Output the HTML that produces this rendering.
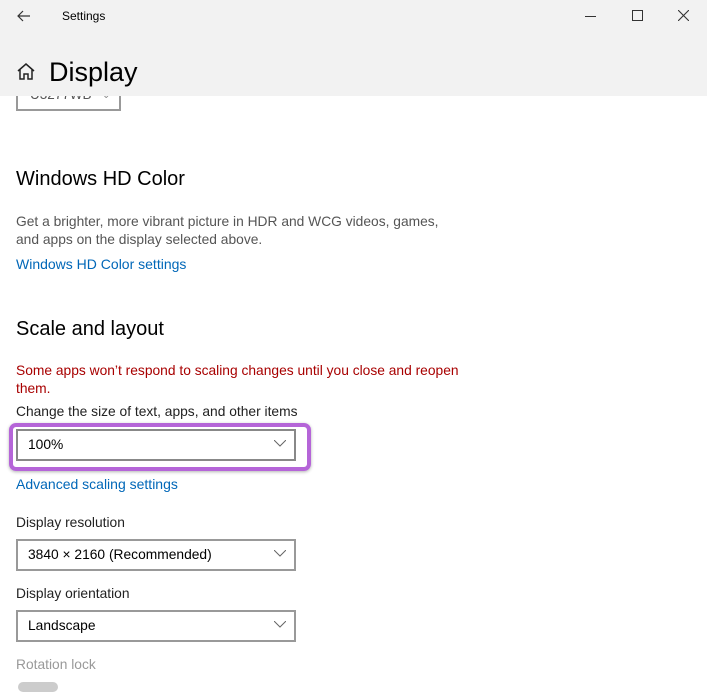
<!DOCTYPE html><html><head><style>
body{margin:0;width:707px;height:686px;overflow:hidden;background:#fff;font-family:"Liberation Sans",sans-serif;position:relative;color:#000}
.a{position:absolute;white-space:nowrap}
.t{font-size:13.8px}
.h{font-size:20px}
.l{color:#0067b8;font-size:14px}
.dd{position:absolute;left:16px;width:276px;height:28px;border:2px solid #999;box-sizing:content-box;background:#fff}
.dd span{position:absolute;left:10px;top:6px;font-size:13.8px}
.dd svg{position:absolute;right:8px;top:9px}
</style></head><body>
<div class="a" style="left:0;top:0;width:707px;height:96px;background:#f2f2f2"></div>
<svg class="a" style="left:17px;top:9px" width="14" height="14" viewBox="0 0 14 14"><path d="M13 7H1M6 2L1 7l5 5" fill="none" stroke="#333" stroke-width="1.2"/></svg>
<div class="a" style="left:62px;top:9px;font-size:12px">Settings</div>
<div class="a" style="left:585px;top:16px;width:11px;height:1px;background:#333"></div>
<div class="a" style="left:632px;top:10px;width:9px;height:9px;border:1px solid #333"></div>
<svg class="a" style="left:678px;top:10px" width="11" height="11"><path d="M0 0L11 11M11 0L0 11" stroke="#333" stroke-width="1.1"/></svg>
<svg class="a" style="left:16px;top:62px" width="20" height="19" viewBox="0 0 20 19"><path d="M2 9L10 2l8 7M4 7.5V17h4v-5h4v5h4V7.5" fill="none" stroke="#222" stroke-width="1.5"/></svg>
<div class="a" style="left:49px;top:57px;font-size:27px">Display</div>
<div class="a" style="left:16px;top:96px;width:101px;height:13px;border:2px solid #999;border-top:none;background:#fff;overflow:hidden"><span style="position:absolute;left:12px;top:-9px;font-size:13.5px;color:#555">U3277WB</span><span style="position:absolute;left:84px;top:-6px;font-size:10px;color:#888">⌄</span></div>
<div class="a h" style="left:16px;top:168px">Windows HD Color</div>
<div class="a t" style="left:16px;top:213px;color:#555;line-height:18px">Get a brighter, more vibrant picture in HDR and WCG videos, games,<br>and apps on the display selected above.</div>
<div class="a l" style="left:16px;top:256px">Windows HD Color settings</div>
<div class="a h" style="left:16px;top:318px">Scale and layout</div>
<div class="a t" style="left:16px;top:362px;color:#a80000;line-height:18px">Some apps won’t respond to scaling changes until you close and reopen<br>them.</div>
<div class="a t" style="left:16px;top:404px;color:#222">Change the size of text, apps, and other items</div>
<div class="a" style="left:9px;top:423px;width:294px;height:40px;border:4px solid #b565d8;border-radius:7px;box-shadow:0 1px 3px rgba(0,0,0,.3)"></div>
<div class="dd" style="top:429px;border-color:#888"><span>100%</span><svg width="12" height="7"><path d="M0 0l6 6 6-6" fill="none" stroke="#666"/></svg></div>
<div class="a l" style="left:16px;top:476px">Advanced scaling settings</div>
<div class="a t" style="left:16px;top:515px;color:#222">Display resolution</div>
<div class="dd" style="top:539px"><span>3840 × 2160 (Recommended)</span><svg width="12" height="7"><path d="M0 0l6 6 6-6" fill="none" stroke="#666"/></svg></div>
<div class="a t" style="left:16px;top:586px;color:#222">Display orientation</div>
<div class="dd" style="top:610px"><span>Landscape</span><svg width="12" height="7"><path d="M0 0l6 6 6-6" fill="none" stroke="#666"/></svg></div>
<div class="a t" style="left:16px;top:657px;color:#999">Rotation lock</div>
<div class="a" style="left:18px;top:682px;width:40px;height:10px;border-radius:6px;background:#ccc"></div>
</body></html>
